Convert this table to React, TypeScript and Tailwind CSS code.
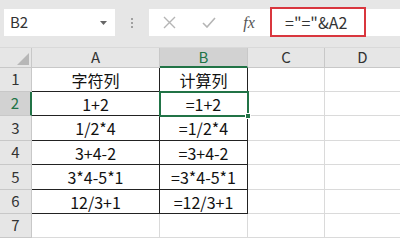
import { Fragment } from "react";

const font = { fontFamily: '"Noto Sans CJK SC", "Noto Sans", sans-serif' };

const rows = [
    ["字符列", "计算列"],
    ["1+2", "=1+2"],
    ["1/2*4", "=1/2*4"],
    ["3+4-2", "=3+4-2"],
    ["3*4-5*1", "=3*4-5*1"],
    ["12/3+1", "=12/3+1"],
    ["", ""],
];

const rowHeights = ["h-[24px]", "h-[24px]", "h-[25px]", "h-[24px]", "h-[25px]", "h-[24px]", "h-[24px]"];

const FormulaBar = () => (
    <div className="h-[48px] bg-[#e6e6e6] flex items-start pt-[9px] border-b border-[#d9d9d9]">
        <div className="ml-[4px] w-[111px] h-[27px] bg-white flex items-center justify-between pl-[6px] pr-[8px] text-[15px] text-[#333]">
            <span>B2</span>
            <svg width="7" height="4" viewBox="0 0 7 4"><path d="M0 0h7L3.5 4z" fill="#666" /></svg>
        </div>
        <div className="w-[34px] h-[27px] flex flex-col items-center justify-center gap-[2px]">
            <span className="w-[2px] h-[2px] bg-[#a0a0a0]" />
            <span className="w-[2px] h-[2px] bg-[#a0a0a0]" />
            <span className="w-[2px] h-[2px] bg-[#a0a0a0]" />
        </div>
        <div className="flex-1 h-[27px] bg-white flex items-center">
            <div className="w-[40px] flex justify-center">
                <svg width="13" height="13" viewBox="0 0 13 13"><path d="M1 1l11 11M12 1L1 12" stroke="#b5b5b5" strokeWidth="1.4" /></svg>
            </div>
            <div className="w-[40px] flex justify-center">
                <svg width="14" height="11" viewBox="0 0 14 11"><path d="M1 6l4 4 8-9" stroke="#b5b5b5" strokeWidth="1.6" fill="none" /></svg>
            </div>
            <div className="w-[40px] flex justify-center text-[16px] italic text-[#555]" style={{ fontFamily: '"Liberation Serif", serif' }}>
                fx
            </div>
            <div className="ml-[1px] -mt-[1px] w-[96px] h-[30px] border-2 border-[#d9363e] flex items-center pl-[13px] text-[16px] text-[#333]">
                ="="&amp;A2
            </div>
        </div>
    </div>
);

export default function App() {
    return (
        <div className="w-[400px] h-[240px] overflow-hidden bg-white relative" style={font}>
            <FormulaBar />
            <div className="grid grid-cols-[32px_128px_88px_77px_1fr] bg-white">
                {/* column headers */}
                <div className="h-[20px] bg-[#e6e6e6] border-r border-b border-[#c8c8c8] flex items-end justify-end p-[2px]">
                    <svg width="12" height="12" viewBox="0 0 12 12"><path d="M12 0v12H0z" fill="#b7b7b7" /></svg>
                </div>
                <div className="h-[20px] bg-[#e6e6e6] border-r border-b border-[#c8c8c8] flex items-center justify-center text-[15px] text-[#333]">A</div>
                <div className="h-[20px] bg-[#d2d2d2] border-r border-b-2 border-r-[#c8c8c8] border-b-[#217346] flex items-center justify-center text-[15px] text-[#217346]">B</div>
                <div className="h-[20px] bg-[#e6e6e6] border-r border-b border-[#c8c8c8] flex items-center justify-center text-[15px] text-[#333]">C</div>
                <div className="h-[20px] bg-[#e6e6e6] border-b border-[#c8c8c8] flex items-center justify-center text-[15px] text-[#333]">D</div>

                {rows.map(([a, b], i) => {
                    const inTable = i < 6;
                    const selected = i === 1;
                    const h = rowHeights[i];
                    return (
                        <Fragment key={i}>
                            <div
                                className={`${h} flex items-center justify-center text-[15px] border-b border-[#c8c8c8] ${
                                    selected ? "bg-[#d2d2d2] text-[#217346] border-r-2 border-r-[#217346]" : "bg-[#e6e6e6] text-[#333] border-r border-r-[#c8c8c8]"
                                }`}
                            >
                                {i + 1}
                            </div>
                            <div
                                className={`${h} flex items-center justify-center text-[16px] text-[#111] border-r border-b ${
                                    inTable ? "border-[#222]" : "border-[#dadada]"
                                }`}
                            >
                                {a}
                            </div>
                            <div
                                className={`${h} flex items-center justify-center text-[16px] text-[#111] border-r border-b ${
                                    inTable ? "border-[#222]" : "border-r-[#dadada] border-b-[#dadada]"
                                }`}
                            >
                                {b}
                            </div>
                            <div className={`${h} border-r border-b border-[#dadada]`} />
                            <div className={`${h} border-b border-[#dadada]`} />
                        </Fragment>
                    );
                })}
            </div>

            {/* selection around B2 */}
            <div className="absolute left-[159px] top-[91px] w-[90px] h-[26px] border-2 border-[#217346] pointer-events-none">
                <div className="absolute -right-[4px] -bottom-[4px] w-[6px] h-[6px] bg-[#217346] border border-white" />
            </div>
        </div>
    );
}
